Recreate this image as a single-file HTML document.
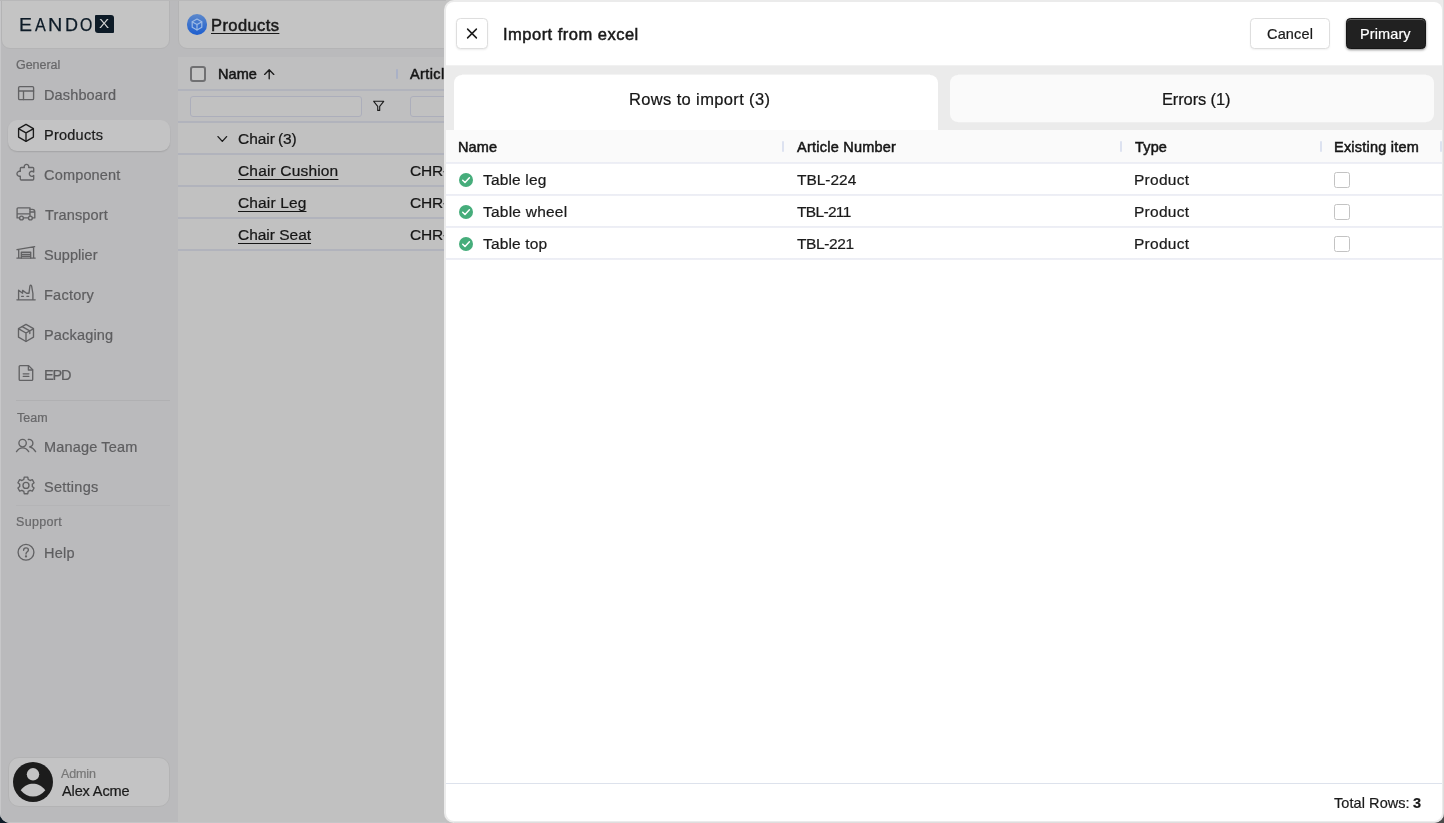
<!DOCTYPE html>
<html lang="en">
<head>
<meta charset="utf-8">
<title>Products – Import from excel</title>
<style>
*{box-sizing:border-box;margin:0;padding:0}
html,body{width:1444px;height:823px;overflow:hidden;background:linear-gradient(90deg,#0f1b27 0%,#0f1b27 40%,#4b4b4b 100%);font-family:"Liberation Sans",sans-serif;}
#win{position:absolute;left:0;top:0;width:1444px;height:823px;overflow:hidden;border-radius:0 0 10px 10px;background:#c1c1c1;}
.abs{position:absolute}
.t{will-change:transform;-webkit-text-stroke:0.22px currentColor;position:absolute;white-space:pre;line-height:20px;font-weight:400}
#side{position:absolute;left:0;top:0;width:178px;height:823px;background:#bababc}
#logo{position:absolute;left:1px;top:-10px;width:169px;height:59px;border-radius:9px;background:#c4c4c4;border:1px solid #b4b4b5}
#pill{position:absolute;left:8px;top:120px;width:162px;height:30.5px;border-radius:9px;background:#c3c3c4;box-shadow:0 1px 1.5px rgba(0,0,0,.12)}
.sep{position:absolute;left:16px;width:154px;height:1px;background:#b0b0b2}
#user{position:absolute;left:8px;top:757px;width:161.5px;height:49.5px;border-radius:11px;background:#c3c3c4;border:1px solid #b3b3b4}
#mainbg{position:absolute;left:178px;top:0;width:270px;height:823px;background:#bababc}
#hdr{position:absolute;left:178px;top:-10px;width:300px;height:59px;border-radius:9px;background:#c4c4c4;border:1px solid #b4b4b5}
#tbl{position:absolute;left:178px;top:57px;width:270px;height:766px;background:#c1c1c1}
.hl{position:absolute;left:178px;width:270px;height:2px;background:#b1b3bc}
.inp{position:absolute;height:21px;border:1px solid #acaebb;border-radius:3px;background:#c1c1c1}
svg{position:absolute;overflow:visible}
.ic{fill:none;stroke:#626264;stroke-width:1.35;stroke-linecap:round;stroke-linejoin:round}
/* drawer */
#drawer{position:absolute;left:444px;top:0;width:1000px;height:823px;background:#ebebeb;border-radius:10px 0 0 10px}
#dhead{position:absolute;left:446px;top:2px;width:996px;height:63px;background:#fff;border-radius:8px 8px 0 0}
#grid{position:absolute;left:446px;top:130px;width:996px;height:691px;background:#fff;border-radius:0 0 8px 8px}
#ghead{position:absolute;left:446px;top:130px;width:996px;height:33px;background:#fafafa}
.gl{position:absolute;left:446px;width:996px;height:2px;background:linear-gradient(#ebedf4,#eff0f6)}
.tabA{position:absolute;left:454px;top:75px;width:484px;height:55px;background:#fff;border-radius:8px 8px 0 0}
.tabB{position:absolute;left:950px;top:75px;width:484px;height:47px;background:#fafafa;border-radius:8px}
.btn{position:absolute;top:17.5px;height:31.5px;border-radius:4.5px}
.cs{position:absolute;top:141px;width:2px;height:10.5px;background:#dde2f0;border-radius:1px}
.cb{position:absolute;width:16px;height:16px;border:1.5px solid #c3c3c3;border-radius:2.5px;background:#fff}
</style>
</head>
<body>
<div id="win">
  <!-- background app (dimmed) -->
  <div id="side"></div>
  <div class="abs" style="left:0;top:0;width:1px;height:823px;background:#c7c7c9"></div>
  <div id="mainbg"></div>
  <div id="tbl"></div>
  <div class="abs" style="left:178px;top:57px;width:270px;height:65px;background:#bfbfc0"></div>
  <div id="logo"></div>
  <div id="hdr"></div>
  <div id="pill"></div>
  <div class="sep" style="top:400px"></div>
  <div class="sep" style="top:505px;background:#b4b4b6"></div>
  <div id="user"></div>
  <div class="abs" style="left:0;top:822px;width:446px;height:1px;background:#c5c5c7"></div>
  <div class="abs" id="logotxt" style="will-change:transform;left:0;top:12.6px;width:120px;height:24px;line-height:24px;font-size:18px;color:#0d1b27;-webkit-text-stroke:0.25px #0d1b27;white-space:pre"><span style="position:absolute;left:18.8px;top:0;transform:scaleX(1.08);transform-origin:0 50%">E</span><span style="position:absolute;left:34.9px;top:0;transform:scaleX(0.9);transform-origin:0 50%">A</span><span style="position:absolute;left:48.25px;top:0;transform:scaleX(1.1);transform-origin:0 50%">N</span><span style="position:absolute;left:64.8px;top:0;transform:scaleX(0.998);transform-origin:0 50%">D</span><span style="position:absolute;left:79.93px;top:0;transform:scaleX(0.882);transform-origin:0 50%">O</span></div>
  <div class="abs" style="left:95.4px;top:15.3px;width:18.3px;height:17.6px;border-radius:1px 3px 1px 3px;background:#0d1b27"></div>
  <div class="abs" style="will-change:transform;left:95.4px;top:15.3px;width:18.3px;height:17.6px;color:#d2d2d2;font-size:12.9px;line-height:18.9px;text-align:center;transform:scaleX(1.18)">X</div>
  <div class="abs" style="left:186.8px;top:14.3px;width:20.4px;height:20.4px;border-radius:50%;background:linear-gradient(180deg,#5c88cb,#1d5ecf)"></div>
  <svg class="abs" style="left:0;top:0" width="460" height="823" viewBox="0 0 460 823">
  <!-- dashboard -->
  <g class="ic">
    <rect x="18.6" y="86.6" width="15" height="13" rx="1.2"/>
    <path d="M18.6 91H33.6M23.5 91V99.6"/>
  </g>
  <!-- products cube (active) -->
  <g class="ic" style="stroke:#1b1b1b;stroke-width:1.35">
    <path d="M26 124.4L33.4 128.6V137.1L26 141.3L18.6 137.1V128.6Z"/>
    <path d="M18.8 128.8L26 132.9L33.2 128.8M26 132.9V141.1"/>
  </g>
  <!-- component puzzle -->
  <g class="ic">
    <path d="M20.3 168.5Q20.3 167.5 21.3 167.5H24.35A2.3 2.3 0 1 1 28.65 167.5H32.7Q33.7 167.5 33.7 168.5V171.95A2.55 2.55 0 1 0 33.7 175.55V179Q33.7 180 32.7 180H21.3Q20.3 180 20.3 179V176.1A2.5 2.5 0 1 1 20.3 171.4Z"/>
  </g>
  <!-- transport truck -->
  <g class="ic">
    <path d="M19.5 217.9H17.1V208.8Q17.1 207.8 18.1 207.8H30V216.2M23.5 217.9H28.4M17.1 213.8H30"/>
    <path d="M30 209.4H32.4Q34.8 209.4 34.8 211.8V217.9H32.4M30 212H34.7"/>
    <circle cx="21.5" cy="218" r="1.9"/><circle cx="30.4" cy="218" r="1.9"/>
  </g>
  <!-- supplier warehouse -->
  <g class="ic">
    <path d="M17 249.6L34.6 246.6M18.7 249.4V258M33.6 246.9V258M16.9 258.1H35.2"/>
    <path d="M21.3 258V252.2H30.7V258M21.3 254.3H30.7M21.3 256.2H30.7"/>
  </g>
  <!-- factory -->
  <g class="ic">
    <path d="M16.9 299.8H35.2M18.6 299.6V290.2L22.6 293.2V290.4L26.6 293.2H29L29.9 286Q30.7 284.4 31.6 286L32.9 293.5V299.6"/>
    <path d="M21.6 296.3H23.4M26.9 296.3H28.7"/>
  </g>
  <!-- packaging -->
  <g class="ic">
    <path d="M26 324.4L33.5 328.7V337.2L26 341.5L18.5 337.2V328.7Z"/>
    <path d="M18.7 328.9L26 333L33.3 328.9M26 333V341.3M22.2 326.6L29.8 330.9V333.6"/>
  </g>
  <!-- EPD doc -->
  <g class="ic">
    <path d="M19.2 366.6Q19.2 365.6 20.2 365.6H28.6L32.7 369.8V379.4Q32.7 380.4 31.7 380.4H20.2Q19.2 380.4 19.2 379.4Z"/>
    <path d="M28.4 365.8V370H32.5M23.2 373.8H28.9M23.2 376.3H28.9"/>
  </g>
  <!-- manage team -->
  <g class="ic">
    <circle cx="22.6" cy="443.1" r="3.7"/>
    <path d="M16.5 451.6C18.2 449 20.2 447.8 22.6 447.8C25 447.8 27 449 28.7 451.6"/>
    <path d="M28.3 439.5C30.8 439.1 32.9 440.8 32.9 443.1C32.9 445.2 31.3 446.7 29.6 446.9C32 447.4 34 448.9 35.6 451.6"/>
  </g>
  <!-- settings gear -->
  <g class="ic">
    <path id="gear" d="M23.81 479.39L24.23 477.09L27.77 477.09L28.19 479.39L30.11 480.50L32.32 479.71L34.08 482.77L32.30 484.29L32.30 486.51L34.08 488.03L32.32 491.09L30.11 490.30L28.19 491.41L27.77 493.71L24.23 493.71L23.81 491.41L21.89 490.30L19.68 491.09L17.92 488.03L19.70 486.51L19.70 484.29L17.92 482.77L19.68 479.71L21.89 480.50Z" style="stroke-linejoin:round"/>
    <circle cx="26" cy="485.4" r="3"/>
  </g>
  <!-- help -->
  <g class="ic">
    <circle cx="26" cy="552.3" r="7.9"/>
    <path d="M23.6 550.3C23.6 548.8 24.6 547.9 26 547.9C27.4 547.9 28.4 548.8 28.4 550C28.4 551.8 26 551.9 26 554"/>
    <circle cx="26" cy="556.3" r="0.5" style="fill:#666668"/>
  </g>
  <!-- avatar -->
  <circle cx="33" cy="782" r="20" fill="#1c1c1c"/>
  <circle cx="33" cy="774.3" r="6.2" fill="#c3c3c4"/>
  <path d="M20.7 790.2C24.5 785.6 28.6 783.8 33 783.8C37.4 783.8 41.5 785.6 45.3 790.2C41.8 794.6 37.6 796.6 33 796.6C28.4 796.6 24.2 794.6 20.7 790.2Z" fill="#c3c3c4"/>
  <!-- blue product badge -->
  <g style="fill:none;stroke:#9dbbe6;stroke-width:1.2;stroke-linejoin:round;stroke-linecap:round">
    <path d="M197 19L201.8 21.7V27.3L197 30L192.2 27.3V21.7Z"/>
    <path d="M192.4 21.9L197 24.5L201.6 21.9M197 24.5V29.8"/>
  </g>
  <!-- sort arrow -->
  <path d="M269.2 78.8V69.9M264.6 74.4L269.2 69.8L273.8 74.4" style="fill:none;stroke:#1c1c1c;stroke-width:1.35;stroke-linecap:round;stroke-linejoin:round"/>
  <!-- filter -->
  <path d="M373.7 101.3H383.7L379.7 106.4V110.4H377.7V106.4Z" style="fill:none;stroke:#1c1c1c;stroke-width:1.1;stroke-linejoin:round"/>
  <!-- chevron -->
  <path d="M218 136.6L222.3 141.4L226.6 136.6" style="fill:none;stroke:#1c1c1c;stroke-width:1.35;stroke-linecap:round;stroke-linejoin:round"/>
</svg>

  <div class="abs" style="left:0;top:0;width:446px;height:1px;background:#b8b8b9"></div>
  <div class="hl" style="top:89px"></div>
  <div class="hl" style="top:121px"></div>
  <div class="hl" style="top:153px"></div>
  <div class="hl" style="top:185px"></div>
  <div class="hl" style="top:217px"></div>
  <div class="hl" style="top:249px"></div>
  <div class="inp" style="left:190px;top:95.5px;width:172px"></div>
  <div class="inp" style="left:410px;top:95.5px;width:60px"></div>
  <div class="abs" style="left:190px;top:65.5px;width:16px;height:16px;border:2px solid #707072;border-radius:3px;background:#c4c4c4"></div>
  <div class="abs" style="left:396px;top:69px;width:2px;height:10px;background:#aab1c6;border-radius:1px"></div>
<span class="t" style="left:16.00px;top:54.67px;font-size:12.5px;letter-spacing:-0.048px;color:#68686a;">General</span>
<span class="t" style="left:44.00px;top:84.98px;font-size:14.5px;letter-spacing:0.133px;color:#5e5e60;">Dashboard</span>
<span class="t" style="left:44.00px;top:124.98px;font-size:14.5px;letter-spacing:0.245px;color:#1b1b1b;">Products</span>
<span class="t" style="left:44.00px;top:164.98px;font-size:14.5px;letter-spacing:0.176px;color:#5e5e60;">Component</span>
<span class="t" style="left:45.00px;top:204.98px;font-size:14.5px;letter-spacing:0.151px;color:#5e5e60;">Transport</span>
<span class="t" style="left:44.00px;top:244.98px;font-size:14.5px;letter-spacing:0.045px;color:#5e5e60;">Supplier</span>
<span class="t" style="left:44.00px;top:284.98px;font-size:14.5px;letter-spacing:0.244px;color:#5e5e60;">Factory</span>
<span class="t" style="left:44.00px;top:324.98px;font-size:14.5px;letter-spacing:0.176px;color:#5e5e60;">Packaging</span>
<span class="t" style="left:44.00px;top:364.98px;font-size:14.5px;letter-spacing:-1.219px;color:#5e5e60;">EPD</span>
<span class="t" style="left:17.00px;top:407.67px;font-size:12.5px;letter-spacing:0.037px;color:#68686a;">Team</span>
<span class="t" style="left:44.00px;top:436.98px;font-size:14.5px;letter-spacing:0.161px;color:#5e5e60;">Manage Team</span>
<span class="t" style="left:44.00px;top:476.98px;font-size:14.5px;letter-spacing:0.259px;color:#5e5e60;">Settings</span>
<span class="t" style="left:16.00px;top:511.67px;font-size:12.5px;letter-spacing:0.335px;color:#68686a;">Support</span>
<span class="t" style="left:44.00px;top:543.18px;font-size:14.5px;letter-spacing:0.237px;color:#5e5e60;">Help</span>
<span class="t" style="left:61.00px;top:763.67px;font-size:12.5px;letter-spacing:-0.135px;color:#777;">Admin</span>
<span class="t" style="left:62.00px;top:780.98px;font-size:14.5px;letter-spacing:-0.117px;color:#1a1a1a;">Alex Acme</span>
<span class="t" style="left:211.00px;top:14.78px;font-size:16.5px;letter-spacing:0.407px;color:#1a1a1a;-webkit-text-stroke:0.5px currentColor;text-decoration:underline;text-underline-offset:2px;text-decoration-thickness:1.3px">Products</span>
<span class="t" style="left:218.00px;top:63.68px;font-size:14.5px;letter-spacing:0.083px;color:#161616;-webkit-text-stroke:0.5px currentColor;">Name</span>
<span class="t" style="left:410.00px;top:63.68px;font-size:14.5px;letter-spacing:0.406px;color:#161616;-webkit-text-stroke:0.5px currentColor;">Article Number</span>
<span class="t" style="left:238.00px;top:128.63px;font-size:15.5px;letter-spacing:-0.047px;color:#161616;">Chair</span>
<span class="t" style="left:278.00px;top:128.63px;font-size:15.5px;letter-spacing:-0.144px;color:#161616;">(3)</span>
<span class="t" style="left:238.00px;top:161.03px;font-size:15.5px;letter-spacing:0.168px;color:#161616;text-decoration:underline;text-underline-offset:3.3px;text-decoration-thickness:1.2px">Chair Cushion</span>
<span class="t" style="left:410.00px;top:161.03px;font-size:15.5px;letter-spacing:-0.154px;color:#161616;">CHR-001</span>
<span class="t" style="left:238.00px;top:193.03px;font-size:15.5px;letter-spacing:0.139px;color:#161616;text-decoration:underline;text-underline-offset:3.3px;text-decoration-thickness:1.2px">Chair Leg</span>
<span class="t" style="left:410.00px;top:193.03px;font-size:15.5px;letter-spacing:-0.154px;color:#161616;">CHR-001</span>
<span class="t" style="left:238.00px;top:225.03px;font-size:15.5px;letter-spacing:-0.021px;color:#161616;text-decoration:underline;text-underline-offset:3.3px;text-decoration-thickness:1.2px">Chair Seat</span>
<span class="t" style="left:410.00px;top:225.03px;font-size:15.5px;letter-spacing:-0.154px;color:#161616;">CHR-001</span>
  <!-- drawer -->
  <div id="drawer"></div>
  <div class="abs" style="left:1443px;top:0;width:1px;height:823px;background:#dedede"></div>
  <div class="abs" style="left:454px;top:822px;width:990px;height:1px;background:#dedede"></div>
  <div id="dhead"></div>
  <div class="tabA"></div>
  <div class="tabB"></div>
  <div class="abs" style="left:446px;top:65px;width:996px;height:1px;background:#f1f1f1"></div>
  <div class="abs" style="left:462px;top:74px;width:468px;height:1px;background:#f3f3f3"></div>
  <div class="abs" style="left:958px;top:74px;width:468px;height:1px;background:#f1f1f1"></div>
  <div class="abs" style="left:958px;top:122px;width:468px;height:1px;background:#efefef"></div>
  <div id="grid"></div>
  <div id="ghead"></div>
  <div class="gl" style="top:162px"></div>
  <div class="gl" style="top:194px"></div>
  <div class="gl" style="top:226px"></div>
  <div class="gl" style="top:258px"></div>
  <div class="abs" style="left:446px;top:783px;width:996px;height:1px;background:#dde2ec"></div>
  <div class="btn" style="left:456px;width:32px;background:#fff;border:1px solid #dedede;box-shadow:0 1px 2px rgba(0,0,0,.08)"></div>
  <div class="btn" style="left:1250px;width:80px;background:#fff;border:1px solid #dedede;box-shadow:0 1px 2px rgba(0,0,0,.06)"></div>
  <div class="btn" style="left:1346px;width:80px;background:#212121;border:1px solid #161616;box-shadow:inset 0 1px 0 rgba(255,255,255,.28),0 1px 3px rgba(0,0,0,.32),0 1px 2px rgba(0,0,0,.2)"></div>
  <div class="cs" style="left:782px"></div>
  <div class="cs" style="left:1120px"></div>
  <div class="cs" style="left:1320px"></div>
  <div class="cs" style="left:1440px"></div>
  <div class="cb" style="left:1334px;top:172px"></div>
  <div class="cb" style="left:1334px;top:204px"></div>
  <div class="cb" style="left:1334px;top:236px"></div>
  <svg class="abs" style="left:444px;top:0" width="1000" height="823" viewBox="444 0 1000 823">
  <path d="M467.6 29.1L476.4 37.9M476.4 29.1L467.6 37.9" style="fill:none;stroke:#1c1c1c;stroke-width:1.5;stroke-linecap:round"/>
  <g>
    <circle cx="466" cy="180" r="7" fill="#46ad7b"/><path d="M462.7 180.2L465 182.5L469.4 177.8" style="fill:none;stroke:#fff;stroke-width:1.5;stroke-linecap:round;stroke-linejoin:round"/>
    <circle cx="466" cy="212" r="7" fill="#46ad7b"/><path d="M462.7 212.2L465 214.5L469.4 209.8" style="fill:none;stroke:#fff;stroke-width:1.5;stroke-linecap:round;stroke-linejoin:round"/>
    <circle cx="466" cy="244" r="7" fill="#46ad7b"/><path d="M462.7 244.2L465 246.5L469.4 241.8" style="fill:none;stroke:#fff;stroke-width:1.5;stroke-linecap:round;stroke-linejoin:round"/>
  </g>
</svg>

<span class="t" style="left:503.00px;top:23.78px;font-size:16.5px;letter-spacing:0.488px;color:#1a1a1a;-webkit-text-stroke:0.5px currentColor;">Import from excel</span>
<span class="t" style="left:1267.00px;top:23.98px;font-size:14.5px;letter-spacing:0.162px;color:#1a1a1a;">Cancel</span>
<span class="t" style="left:1360.00px;top:23.98px;font-size:14.5px;letter-spacing:0.113px;color:#ffffff;-webkit-text-stroke:0.2px currentColor;">Primary</span>
<span class="t" style="left:629.00px;top:88.88px;font-size:16.5px;letter-spacing:0.365px;color:#161616;">Rows to import (3)</span>
<span class="t" style="left:1162.00px;top:88.58px;font-size:16.5px;letter-spacing:-0.132px;color:#161616;">Errors (1)</span>
<span class="t" style="left:458.00px;top:136.88px;font-size:14.5px;letter-spacing:0.150px;color:#161616;-webkit-text-stroke:0.5px currentColor;">Name</span>
<span class="t" style="left:797.00px;top:136.88px;font-size:14.5px;letter-spacing:0.235px;color:#161616;-webkit-text-stroke:0.5px currentColor;">Article Number</span>
<span class="t" style="left:1135.00px;top:136.88px;font-size:14.5px;letter-spacing:0.167px;color:#161616;-webkit-text-stroke:0.5px currentColor;">Type</span>
<span class="t" style="left:1334.00px;top:136.88px;font-size:14.5px;letter-spacing:0.225px;color:#161616;-webkit-text-stroke:0.5px currentColor;">Existing item</span>
<span class="t" style="left:483.00px;top:170.33px;font-size:15.5px;letter-spacing:0.158px;color:#1b1b1b;">Table leg</span>
<span class="t" style="left:797.00px;top:170.33px;font-size:15.5px;letter-spacing:-0.023px;color:#1b1b1b;">TBL-224</span>
<span class="t" style="left:1134.00px;top:170.33px;font-size:15.5px;letter-spacing:0.269px;color:#1b1b1b;">Product</span>
<span class="t" style="left:483.00px;top:202.33px;font-size:15.5px;letter-spacing:0.231px;color:#1b1b1b;">Table wheel</span>
<span class="t" style="left:797.00px;top:202.33px;font-size:15.5px;letter-spacing:-0.673px;color:#1b1b1b;">TBL-211</span>
<span class="t" style="left:1134.00px;top:202.33px;font-size:15.5px;letter-spacing:0.269px;color:#1b1b1b;">Product</span>
<span class="t" style="left:483.00px;top:234.33px;font-size:15.5px;letter-spacing:0.139px;color:#1b1b1b;">Table top</span>
<span class="t" style="left:797.00px;top:234.33px;font-size:15.5px;letter-spacing:-0.398px;color:#1b1b1b;">TBL-221</span>
<span class="t" style="left:1134.00px;top:234.33px;font-size:15.5px;letter-spacing:0.269px;color:#1b1b1b;">Product</span>
<span class="t" style="left:1334.00px;top:792.73px;font-size:14.5px;letter-spacing:0.071px;color:#1b1b1b;">Total Rows:</span>
<span class="t" style="left:1413.00px;top:792.73px;font-size:14.5px;letter-spacing:0.000px;color:#1a1a1a;font-weight:700;">3</span>
</div>
</body>
</html>
